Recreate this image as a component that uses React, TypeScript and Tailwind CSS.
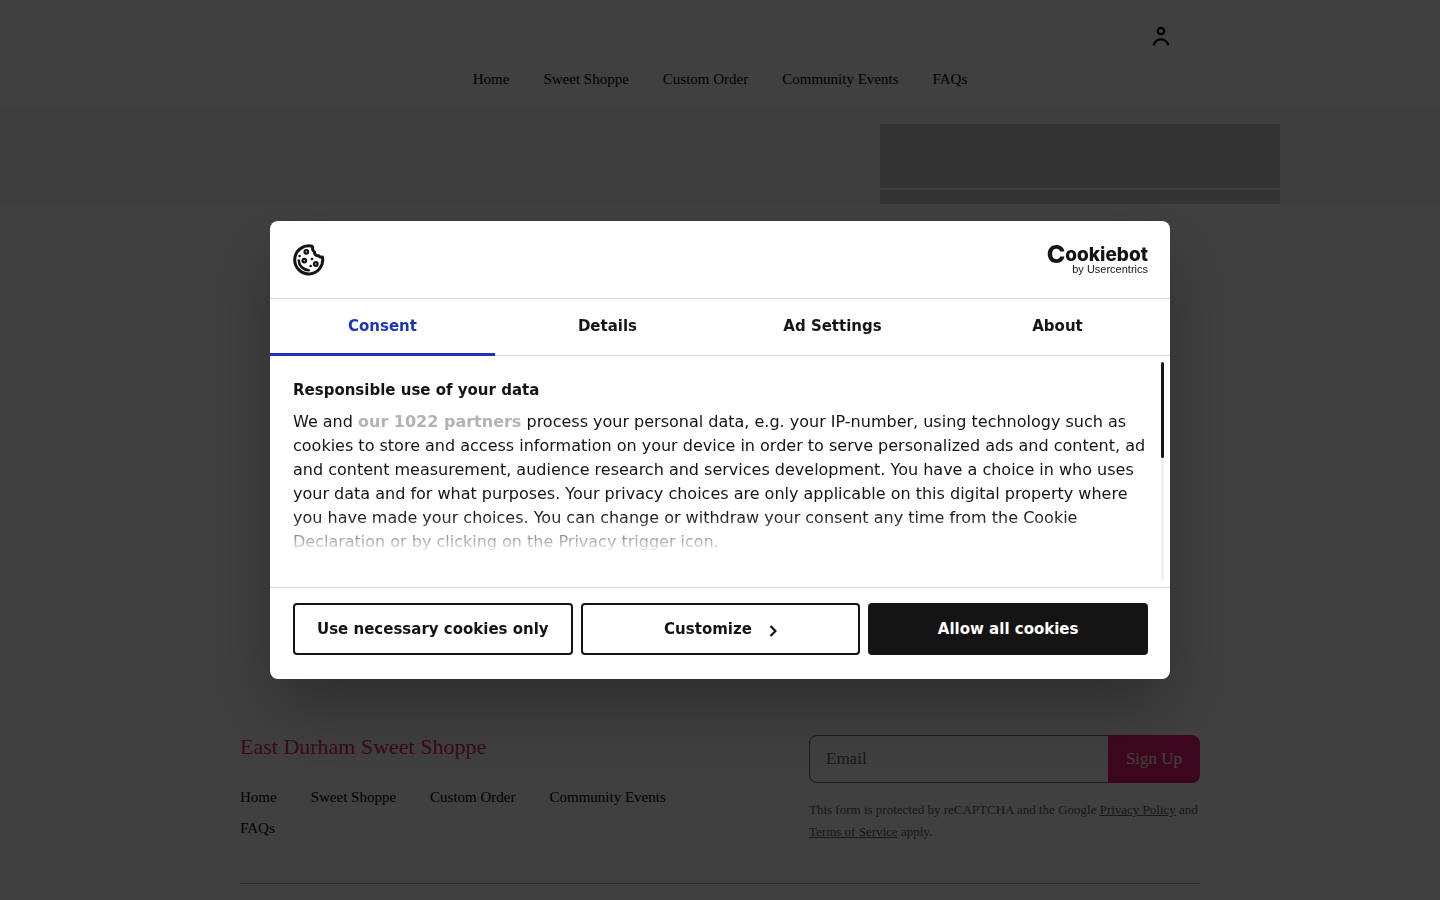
import { useState } from 'react';

const NAV_LINKS = ['Home', 'Sweet Shoppe', 'Custom Order', 'Community Events', 'FAQs'];
const TABS = ['Consent', 'Details', 'Ad Settings', 'About'];

function UserIcon() {
    return (
        <svg width="24" height="24" viewBox="0 0 24 24" fill="none" stroke="currentColor" strokeWidth="2.2">
            <circle cx="12" cy="7" r="3.2" />
            <path d="M4.8 21.4a7.3 7.3 0 0 1 14.4 0" />
        </svg>
    );
}

function CookieIcon() {
    return (
        <svg width="32" height="32" viewBox="0 0 32 32" fill="none" stroke="#141414" strokeLinecap="round" strokeLinejoin="round">
            <path
                strokeWidth="3"
                d="M19 2.3A14 14 0 1 0 29.4 13c-1.3.4-2.8 0-3.6-1.200-2.600.3-4.500-1.300-4.300-3.800-1.700-1-2.200-2.700-1.700-4.500Z"
            />
            <path strokeWidth="2.6" d="M5.8 16.5c.2 5.4 4.3 9.5 9.9 9.7" />
            <g strokeWidth="2.2">
                <circle cx="13.3" cy="7.8" r="1.8" />
                <circle cx="11.3" cy="16.6" r="1.8" />
                <circle cx="22.8" cy="20" r="1.8" />
            </g>
            <g fill="#141414" stroke="none">
                <circle cx="6.6" cy="12" r="1.3" />
                <circle cx="19" cy="15" r="1.3" />
                <circle cx="17.7" cy="22" r="1.3" />
            </g>
        </svg>
    );
}

function CookiebotLogo() {
    return (
        <svg width="104" height="40" viewBox="0 0 104 40" fill="#141414" className="overflow-visible" role="img" aria-label="Cookiebot by Usercentrics">
            <text x="102" y="23" fontSize="19" fontWeight="800" textAnchor="end" fontFamily="Inter, sans-serif">
                <tspan fontSize="25">C</tspan><tspan dy="-2">ookiebot</tspan>
            </text>
            <text x="102" y="33" fontSize="11" textAnchor="end" fontFamily="Liberation Sans, sans-serif">by Usercentrics</text>
        </svg>
    );
}

function SiteHeader() {
    return (
        <header className="h-[108px] pt-6">
            <div className="mx-auto flex max-w-[960px] justify-end px-[27px]">
                <button type="button" aria-label="Account">
                    <UserIcon />
                </button>
            </div>
            <nav className="mt-[19px] flex justify-center gap-[34px] text-[15px] leading-6">
                {NAV_LINKS.map((link) => (
                    <a key={link} href="#">{link}</a>
                ))}
            </nav>
        </header>
    );
}

function SiteFooter() {
    return (
        <footer className="mx-auto mt-[531px] w-full max-w-[960px]">
            <div className="flex justify-between border-b border-[#a0a0a0] pb-10">
                <div className="w-[480px]">
                    <h2 className="text-[22px] leading-6 text-[#e8256f]">East Durham Sweet Shoppe</h2>
                    <nav className="mt-[26px] flex flex-wrap gap-x-[34px] gap-y-[7px] text-[15px] leading-6">
                        {NAV_LINKS.map((link) => (
                            <a key={link} href="#">{link}</a>
                        ))}
                    </nav>
                </div>
                <form className="w-[391px]" onSubmit={(e) => e.preventDefault()}>
                    <div className="flex h-12">
                        <input
                            type="email"
                            aria-label="Email"
                            placeholder="Email"
                            className="min-w-0 flex-1 rounded-l-lg border border-r-0 border-[#707070] px-4 text-[17px] placeholder:text-[#606060]"
                        />
                        <button type="submit" className="w-[92px] rounded-r-lg bg-[#f01f70] text-[17px] text-white">
                            Sign Up
                        </button>
                    </div>
                    <p className="mt-4 text-[13px] leading-[22px] text-[#606060]">
                        This form is protected by reCAPTCHA and the Google{' '}
                        <a href="#" className="underline">Privacy Policy</a> and
                        <br />
                        <a href="#" className="underline">Terms of Service</a> apply.
                    </p>
                </form>
            </div>
        </footer>
    );
}

function ConsentDialog() {
    const [activeTab, setActiveTab] = useState('Consent');

    return (
        <div
            role="dialog"
            aria-modal="true"
            aria-label="Cookie consent"
            className="w-full max-w-[900px] overflow-hidden rounded-lg bg-white font-['DejaVu_Sans',sans-serif] text-[15px] text-[#141414] shadow-[0_32px_68px_rgba(0,0,0,0.3)]"
        >
            <div className="flex h-[78px] items-center justify-between border-b border-[#d6d6d6] pr-5 pl-[23px]">
                <CookieIcon />
                <CookiebotLogo />
            </div>

            <div role="tablist" className="grid h-[57px] grid-cols-4 border-b border-[#d6d6d6]">
                {TABS.map((tab) => (
                    <button
                        key={tab}
                        type="button"
                        role="tab"
                        aria-selected={tab === activeTab}
                        onClick={() => setActiveTab(tab)}
                        className={`h-[57px] border-b-[3px] font-bold ${tab === activeTab ? 'border-[#1a34b8] text-[#1a34b8]' : 'border-transparent'}`}
                    >
                        {tab}
                    </button>
                ))}
            </div>

            <div className="relative h-[231px] pt-[22px] pl-[23px] leading-6">
                <h2 className="font-bold">Responsible use of your data</h2>
                <p className="mt-2 text-base whitespace-nowrap">
                    We and <a href="#" className="font-bold text-[#b3b3b3]">our 1022 partners</a> process your personal data, e.g. your IP-number, using technology such as
                    <br />
                    cookies to store and access information on your device in order to serve personalized ads and content, ad
                    <br />
                    and content measurement, audience research and services development. You have a choice in who uses
                    <br />
                    your data and for what purposes. Your privacy choices are only applicable on this digital property where
                    <br />
                    you have made your choices. You can change or withdraw your consent any time from the Cookie
                    <br />
                    Declaration or by clicking on the Privacy trigger icon.
                </p>
                <div className="pointer-events-none absolute inset-x-0 bottom-0 h-[72px] bg-linear-to-t from-white from-45% to-transparent" />
                {/* Scroll track */}
                <div className="absolute top-1.5 right-1.5 bottom-1.5 w-[3px] rounded-full bg-[#f0f0f0]">
                    <div className="h-24 rounded-full bg-[#141414]" />
                </div>
            </div>

            <div className="grid grid-cols-3 gap-2 border-t border-[#d6d6d6] pt-[15px] pr-[22px] pb-6 pl-[23px] font-bold">
                <button type="button" className="h-[52px] rounded border-2 border-[#141414]">Use necessary cookies only</button>
                <button type="button" className="flex h-[52px] items-center justify-center gap-[17px] rounded border-2 border-[#141414]">
                    Customize
                    <svg className="mt-1" width="8" height="12" viewBox="0 0 8 12" fill="none" stroke="currentColor" strokeWidth="2.2">
                        <path d="m1.5 1 5 5-5 5" />
                    </svg>
                </button>
                <button type="button" className="h-[52px] rounded border-2 border-[#141414] bg-[#141414] text-white">Allow all cookies</button>
            </div>
        </div>
    );
}

export default function App() {
    return (
        <div className="h-screen overflow-hidden bg-white font-['Liberation_Serif',serif] text-black">
            <SiteHeader />
            <div className="flex h-24 justify-end bg-[#f8f8f8] px-40 pt-4">
                <div className="flex w-[400px] flex-col gap-0.5">
                    <div className="h-16 bg-[#cccccc]" />
                    <div className="flex-1 bg-[#cccccc]" />
                </div>
            </div>
            <SiteFooter />

            <div className="fixed inset-0 flex items-center justify-center bg-black/75">
                <ConsentDialog />
            </div>
        </div>
    );
}
